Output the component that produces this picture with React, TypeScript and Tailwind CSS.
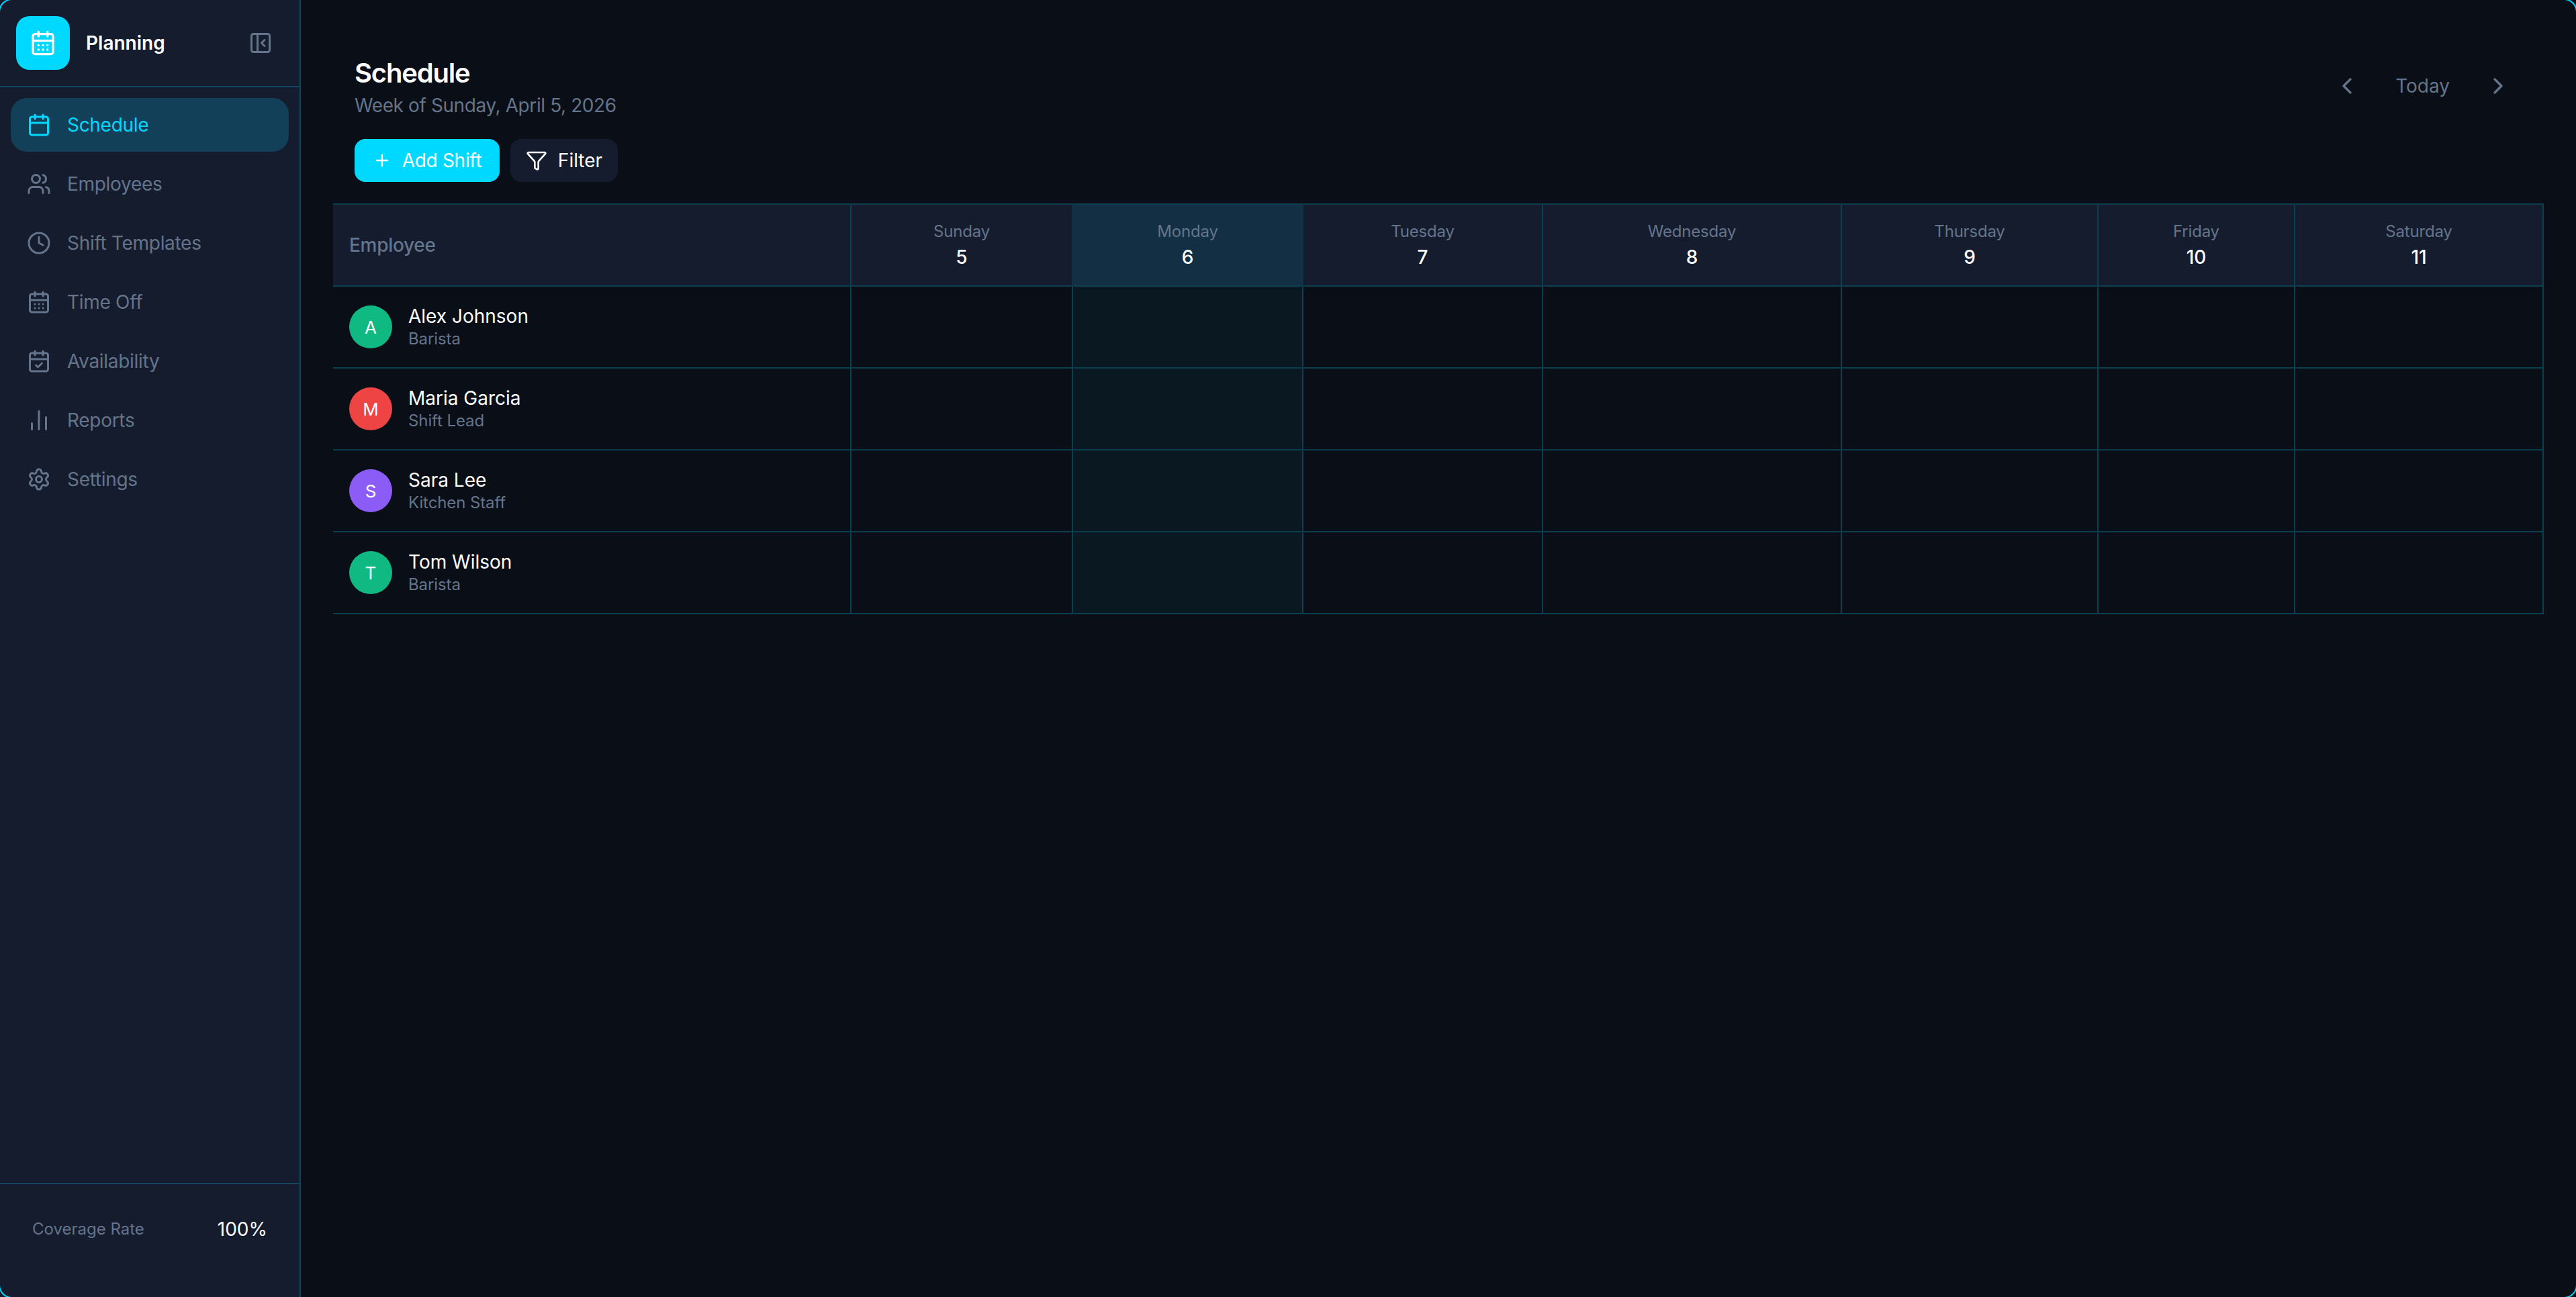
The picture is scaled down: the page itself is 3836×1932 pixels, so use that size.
import { Calendar, CalendarCheck, CalendarDays, ChartNoAxesColumn, ChevronLeft, ChevronRight, Clock, Filter, PanelLeftClose, Plus, Settings, Users } from "lucide-react";

const navItems = [
  { label: "Schedule", icon: Calendar, active: true },
  { label: "Employees", icon: Users },
  { label: "Shift Templates", icon: Clock },
  { label: "Time Off", icon: CalendarDays },
  { label: "Availability", icon: CalendarCheck },
  { label: "Reports", icon: ChartNoAxesColumn },
  { label: "Settings", icon: Settings },
];

const days = [
  { name: "Sunday", date: 5, width: "w-[330px]", head: "border-r-[#132f43]" },
  { name: "Monday", date: 6, width: "w-[343px]", head: "border-r-[#132f43] bg-[#132f43]", today: true },
  { name: "Tuesday", date: 7, width: "w-[357px]", head: "border-r-[#0b3f50]" },
  { name: "Wednesday", date: 8, width: "w-[445px]", head: "border-r-[#0b3f50]" },
  { name: "Thursday", date: 9, width: "w-[382px]", head: "border-r-[#0b3f50]" },
  { name: "Friday", date: 10, width: "w-[293px]", head: "border-r-[#0b3f50]" },
  { name: "Saturday", date: 11, width: "w-[370px]", head: "border-r-[#0b3f50]" },
];

const employees = [
  { name: "Alex Johnson", role: "Barista", color: "bg-[#10b981]" },
  { name: "Maria Garcia", role: "Shift Lead", color: "bg-[#ef4444]" },
  { name: "Sara Lee", role: "Kitchen Staff", color: "bg-[#8b5cf6]" },
  { name: "Tom Wilson", role: "Barista", color: "bg-[#10b981]" },
];

const App = () => {
  return (
    <div className="relative flex h-[1932px] w-[3836px] overflow-hidden bg-[#0a0e17] font-['Inter',sans-serif] text-[28px] text-white">
      {/* Sidebar */}
      <aside className="flex w-[448px] shrink-0 flex-col border-r-2 border-[#134560] bg-[#151c2e]">
        <div className="flex h-[130px] shrink-0 items-center border-b-2 border-[#134560] pl-6 pr-[40px]">
          <div className="flex h-20 w-20 items-center justify-center rounded-[20px] bg-[#00d9ff]">
            <CalendarDays className="h-10 w-10 text-white" />
          </div>
          <span className="ml-6 flex-1 font-semibold">Planning</span>
          <PanelLeftClose className="h-9 w-9 text-[#64748b]" />
        </div>
        <nav className="flex flex-1 flex-col gap-2 p-4">
          {navItems.map((item) => (
            <div
              key={item.label}
              className={`flex h-20 items-center gap-6 rounded-3xl px-6 tracking-[-0.3px] ${item.active ? "bg-[#114058] text-[#00d9ff]" : "text-[#64748b]"}`}
            >
              <item.icon className="h-9 w-9 shrink-0" />
              <span>{item.label}</span>
            </div>
          ))}
        </nav>
        <div className="flex h-[170px] shrink-0 items-center justify-between border-t-2 border-[#134560] pb-[34px] pl-12 pr-12">
          <span className="text-[24px] text-[#64748b]">Coverage Rate</span>
          <span>100%</span>
        </div>
      </aside>

      {/* Main */}
      <main className="flex-1 px-12 pt-[85px]">
        <div className="flex items-start justify-between px-8">
          <div>
            <h1 className="text-[40px] font-semibold leading-[48px] tracking-[-1.2px]">Schedule</h1>
            <p className="mt-[6px] leading-9 tracking-[-0.4px] text-[#64748b]">Week of Sunday, April 5, 2026</p>
            <div className="mt-8 flex gap-4">
              <button className="flex h-16 w-[216px] items-center justify-center gap-4 rounded-2xl bg-[#00d9ff] tracking-[-0.3px] text-white">
                <Plus className="h-7 w-7" />
                Add Shift
              </button>
              <button className="flex h-16 w-[160px] items-center justify-center gap-4 rounded-2xl bg-[#151c2e] text-white">
                <Filter className="h-8 w-8" />
                Filter
              </button>
            </div>
          </div>
          <div className="mt-[22px] flex items-center gap-[52px] pr-4 text-[#64748b]">
            <ChevronLeft className="h-10 w-10" />
            <span>Today</span>
            <ChevronRight className="h-10 w-10" />
          </div>
        </div>

        <table className="mt-8 w-[3292px] table-fixed border-separate border-spacing-0">
          <thead>
            <tr className="h-[124px] bg-[#151c2e]">
              <th className="w-[772px] border-y-2 border-r-2 border-[#0b3f50] pl-6 text-left font-medium tracking-[-0.3px] text-[#64748b]">Employee</th>
              {days.map((d) => (
                <th key={d.name} className={`${d.width} border-y-2 border-r-2 border-y-[#0b3f50] font-normal ${d.head}`}>
                  <div className="text-[24px] leading-9 tracking-[-0.2px] text-[#64748b]">{d.name}</div>
                  <div className="text-[28px] font-medium leading-10 text-white">{d.date}</div>
                </th>
              ))}
            </tr>
          </thead>
          <tbody>
            {employees.map((e) => (
              <tr key={e.name} className="h-[122px]">
                <td className="border-b-2 border-r-2 border-[#0b3f50] pl-6">
                  <div className="flex items-center gap-6">
                    <div className={`flex h-16 w-16 items-center justify-center rounded-full ${e.color} text-[26px]`}>{e.name[0]}</div>
                    <div>
                      <div className="leading-9">{e.name}</div>
                      <div className="text-[24px] leading-8 tracking-[-0.1px] text-[#64748b]">{e.role}</div>
                    </div>
                  </div>
                </td>
                {days.map((d) => (
                  <td key={d.name} className={`border-b-2 border-r-2 border-[#0b3f50] ${d.today ? "bg-[#0a1822]" : ""}`} />
                ))}
              </tr>
            ))}
          </tbody>
        </table>
      </main>

      {/* frame corners of the window */}
      <div className="pointer-events-none absolute -inset-[2px] rounded-[20px] border-2 border-[#00d9ff]" />
    </div>
  );
};

export default App;
